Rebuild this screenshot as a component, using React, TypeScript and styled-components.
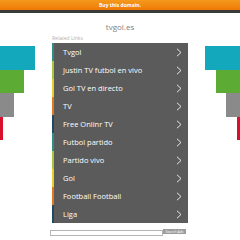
import React from "react";
import styled, { createGlobalStyle } from "styled-components";

const GlobalStyle = createGlobalStyle`
  html, body {
    margin: 0;
    padding: 0;
    background: #ffffff;
    font-family: "Open Sans", "Liberation Sans", sans-serif;
  }
`;

const links = [
  { label: "Tvgol", color: "#2f8f83" },
  { label: "Justin TV futbol en vivo", color: "#a6c63b" },
  { label: "Gol TV en directo", color: "#e6cf2c" },
  { label: "TV", color: "#e07b22" },
  { label: "Free Onlinr TV", color: "#1f4a63" },
  { label: "Futbol partido", color: "#2f8f83" },
  { label: "Partido vivo", color: "#a6c63b" },
  { label: "Gol", color: "#e6cf2c" },
  { label: "Football Football", color: "#e07b22" },
  { label: "Liga", color: "#1f4a63" },
];

const bars = [
  { width: 35, color: "#14a8bd" },
  { width: 24, color: "#5cab35" },
  { width: 14, color: "#8a8a8a" },
  { width: 3, color: "#d8102e" },
];

function Chevron(): React.ReactElement {
  return (
    <svg width="6" height="9" viewBox="0 0 6 9">
      <polyline
        points="1,0.8 5,4.5 1,8.2"
        fill="none"
        stroke="#e6e6e6"
        strokeWidth="1"
      />
    </svg>
  );
}

function App(): React.ReactElement {
  return (
    <>
      <GlobalStyle />
      <Page>
        <TopBar>Buy this domain.</TopBar>
        <DarkStripe />
        <Title>tvgol.es</Title>
        <Body>
          <Side $align="flex-start">
            {bars.map(bar => (
              <Bar key={bar.color} $color={bar.color} style={{ width: bar.width }} />
            ))}
          </Side>
          <Center>
            <Related>Related Links</Related>
            <List>
              {links.map(link => (
                <Row key={link.label} $color={link.color}>
                  <span>{link.label}</span>
                  <Chevron />
                </Row>
              ))}
            </List>
            <SearchRow>
              <SearchInput />
              <SearchButton>Search Ads</SearchButton>
            </SearchRow>
          </Center>
          <Side $align="flex-end">
            {bars.map(bar => (
              <Bar key={bar.color} $color={bar.color} style={{ width: bar.width }} />
            ))}
          </Side>
        </Body>
      </Page>
    </>
  );
}

export default App;

const Page = styled.div`
  width: 240px;
  height: 240px;
  overflow: hidden;
  display: flex;
  flex-direction: column;
`;

const TopBar = styled.div`
  height: 10px;
  background: linear-gradient(#f59a1c, #ef7a05);
  color: #ffffff;
  font-size: 5px;
  font-weight: 700;
  line-height: 10px;
  text-align: center;
`;

const DarkStripe = styled.div`
  height: 3px;
  background: #3a3a3a;
`;

const Title = styled.div`
  height: 20px;
  line-height: 27px;
  text-align: center;
  color: #808080;
  font-size: 8px;
  font-weight: 400;
`;

const Body = styled.div`
  display: flex;
  flex-direction: row;
`;

const Side = styled.div<{ $align: string }>`
  width: 52px;
  padding-top: 13px;
  display: flex;
  flex-direction: column;
  align-items: ${props => props.$align};
`;

const Bar = styled.div<{ $color: string }>`
  height: 23.5px;
  background: ${props => props.$color};
`;

const Center = styled.div`
  width: 136px;
  display: flex;
  flex-direction: column;
`;

const Related = styled.div`
  height: 10px;
  line-height: 10px;
  font-size: 5px;
  color: #b0b0b0;
`;

const List = styled.div`
  display: flex;
  flex-direction: column;
  background: #5b5b5b;
`;

const Row = styled.div<{ $color: string }>`
  height: 18px;
  display: flex;
  align-items: center;
  justify-content: space-between;
  padding: 0 6px 0 9px;
  border-left: 2px solid ${props => props.$color};
  color: #ffffff;
  font-size: 7.5px;
  font-weight: 500;
`;

const SearchRow = styled.div`
  display: flex;
  flex-direction: row;
  margin-top: 7px;
  margin-left: -2px;
`;

const SearchInput = styled.div`
  width: 111px;
  height: 4px;
  border: 1px solid #b5b5b5;
  background: #ffffff;
`;

const SearchButton = styled.div`
  width: 23px;
  height: 5px;
  margin-top: -1px;
  background: #9c9c9c;
  color: #ffffff;
  font-size: 3.5px;
  line-height: 5px;
  text-align: center;
`;
